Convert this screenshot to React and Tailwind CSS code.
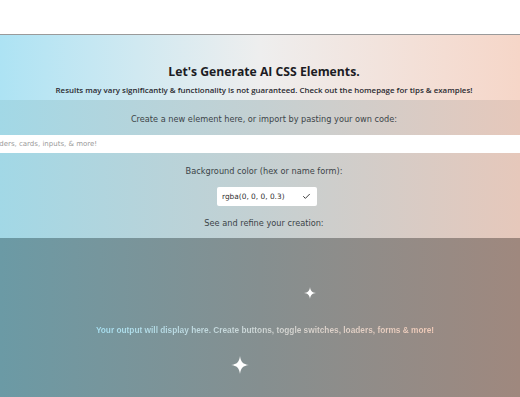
import { Check } from "lucide-react";

const Sparkle = ({ className }) => (
  <svg viewBox="0 0 24 24" className={className} fill="white">
    <path d="M12 0 C13 8 16 11 24 12 C16 13 13 16 12 24 C11 16 8 13 0 12 C8 11 11 8 12 0 Z" />
  </svg>
);

const App = () => {
  return (
    <div
      className="w-full h-[397px] bg-white flex flex-col overflow-hidden"
      style={{ fontFamily: "'DejaVu Sans', 'Noto Sans', sans-serif" }}
    >
      {/* top white bar */}
      <div className="h-[35px] shrink-0 bg-white border-b-[1.5px] border-[#9a9a9a]"></div>

      {/* heading */}
      <div
        className="h-[65px] shrink-0 flex flex-col items-center justify-end pb-[5px] pl-[8px] bg-gradient-to-r from-[#ade3f4] via-[#eeeeee] to-[#f6d6c8]"
        style={{ fontFamily: "'Open Sans', 'Noto Sans', sans-serif" }}
      >
        <h1 className="text-[12.2px] font-bold text-[#1c1c24] leading-none">
          Let's Generate AI CSS Elements.
        </h1>
        <p className="mt-[9px] text-[7.9px] font-semibold text-[#2a2a30] leading-none">
          Results may vary significantly &amp; functionality is not guaranteed. Check out the homepage for tips &amp; examples!
        </p>
      </div>

      {/* form band */}
      <div className="h-[138px] shrink-0 flex flex-col items-center pl-[8px] bg-gradient-to-r from-[#a2d8e6] via-[#c4d0d2] to-[#e6c8bb]">
        <p className="mt-[15px] text-[8.2px] text-[#3c4448] leading-none">
          Create a new element here, or import by pasting your own code:
        </p>
        <div className="mt-[12px] -ml-[8px] w-[520px] h-[18px] bg-white overflow-hidden flex items-center">
          <input
            className="-ml-[194px] w-[700px] h-full px-2 text-[7px] text-[#333] placeholder-[#9a9a9a] outline-none bg-transparent"
            placeholder="Describe your element: buttons, toggle switches, loaders, cards, inputs, & more!"
          />
        </div>
        <p className="mt-[14px] text-[8.2px] text-[#3c4448] leading-none">
          Background color (hex or name form):
        </p>
        <div className="mt-[12px] ml-[6px] w-[100px] h-[19px] bg-white rounded-[2px] flex items-center justify-between pl-[5px] pr-[6px]">
          <span className="text-[7.4px] text-[#333] leading-none">rgba(0, 0, 0, 0.3)</span>
          <Check className="w-[9px] h-[9px] text-[#333]" strokeWidth={2.5} />
        </div>
        <p className="mt-[13px] text-[8.2px] text-[#3c4448] leading-none">
          See and refine your creation:
        </p>
      </div>

      {/* output area */}
      <div className="relative flex-1 flex items-center justify-center pl-[10px] bg-gradient-to-r from-[#6b9aa5] via-[#858f90] to-[#9f887e]">
        <Sparkle className="absolute left-[304px] top-[49px] w-[12px] h-[12px]" />
        <p
          className="mt-[26px] text-[8.3px] font-bold leading-none bg-gradient-to-r from-[#a6dff0] to-[#f2cbb8] bg-clip-text text-transparent"
          style={{ fontFamily: "'Liberation Sans', Arial, sans-serif" }}
        >
          Your output will display here. Create buttons, toggle switches, loaders, forms &amp; more!
        </p>
        <Sparkle className="absolute left-[231px] top-[118px] w-[18px] h-[18px]" />
      </div>
    </div>
  );
};

export default App;
